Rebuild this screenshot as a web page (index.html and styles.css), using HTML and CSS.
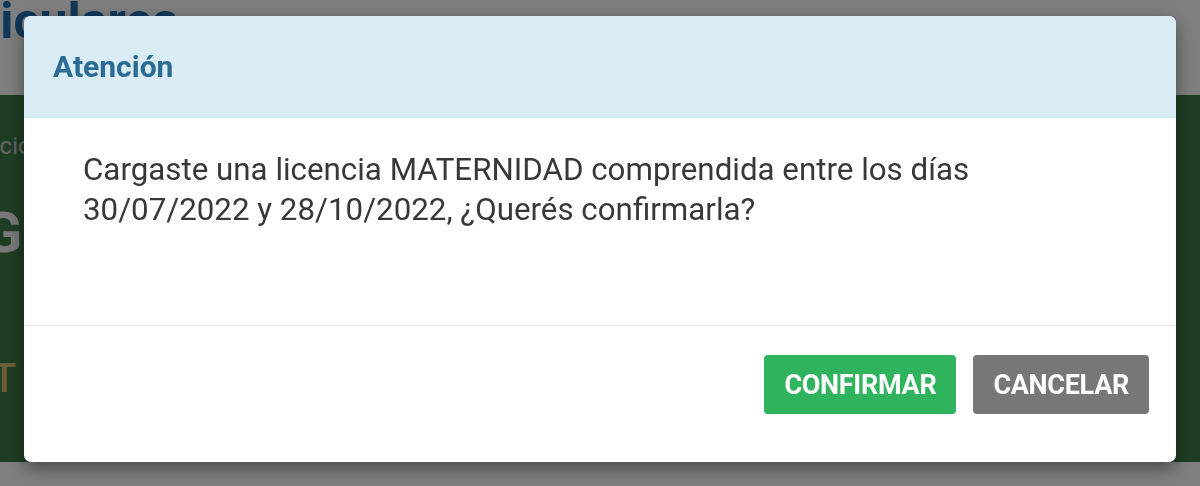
FILE: index.html
```html
<!DOCTYPE html>
<html lang="es">
<head>
<meta charset="utf-8">
<title>Atención</title>
<link rel="stylesheet" href="styles.css">
</head>
<body>
  <div class="page">
    <header class="page-top">
      <h1 class="page-title">Particulares</h1>
    </header>
    <section class="banner">
      <div class="crumb">Inicio</div>
      <div class="banner-title">GESTIÓN</div>
      <div class="banner-sub"><span class="tan">T</span> <span class="blue">I</span></div>
    </section>
  </div>

  <div class="overlay"></div>

  <div class="modal" role="dialog">
    <div class="modal-header">
      <h4 class="modal-title">Atención</h4>
    </div>
    <div class="modal-body">
      <p class="message">Cargaste una licencia MATERNIDAD comprendida entre los días<br>30/07/2022 y 28/10/2022, ¿Querés confirmarla?</p>
    </div>
    <div class="modal-footer">
      <button class="btn btn-confirm" type="button">CONFIRMAR</button>
      <button class="btn btn-cancel" type="button">CANCELAR</button>
    </div>
  </div>
</body>
</html>
```

FILE: styles.css
```css
* { box-sizing: border-box; }

html, body {
  margin: 0;
  padding: 0;
  width: 1200px;
  height: 486px;
  overflow: hidden;
  background: #ffffff;
  font-family: Roboto, "Liberation Sans", Arial, sans-serif;
}

.page {
  display: flex;
  flex-direction: column;
}

.page-top {
  height: 95px;
  background: #ffffff;
  overflow: hidden;
}

.page-title {
  margin: -7px 0 0 -95px;
  font-size: 50px;
  font-weight: 700;
  line-height: 56px;
  color: #1f70b0;
  white-space: nowrap;
}

.banner {
  height: 367px;
  background: #3e7b47;
  display: flex;
  flex-direction: column;
  overflow: hidden;
  white-space: nowrap;
}

.crumb {
  margin: 36px 0 0 -26px;
  font-size: 24px;
  line-height: 30px;
  color: #c9cfc9;
}

.banner-title {
  margin: 40px 0 0 -16px;
  font-size: 56px;
  font-weight: 700;
  line-height: 64px;
  color: #f2f2f2;
}

.banner-sub {
  margin: 90px 0 0 -8px;
  font-size: 40px;
  font-weight: 500;
  line-height: 48px;
}

.banner-sub .tan { color: #d6bd6c; }
.banner-sub .blue { color: #8fb7d6; }

.overlay {
  position: fixed;
  inset: 0;
  background: rgba(0, 0, 0, 0.5);
}

.modal {
  position: fixed;
  top: 16px;
  left: 24px;
  width: 1152px;
  height: 446px;
  background: #ffffff;
  border-radius: 7px;
  overflow: hidden;
  box-shadow: 0 6px 18px rgba(0, 0, 0, 0.45);
  display: flex;
  flex-direction: column;
}

.modal-header {
  height: 102px;
  padding: 33px 29px 0;
  background: #d9ebf5;
  border-bottom: 2px solid #c9eaee;
}

.modal-title {
  margin: 0;
  font-size: 30px;
  line-height: 36px;
  font-weight: 700;
  color: #2c6b93;
}

.modal-body {
  height: 207px;
  padding: 32px 59px 0;
}

.message {
  margin: 0;
  font-size: 31.3px;
  line-height: 40px;
  color: #383838;
}

.modal-footer {
  flex: 1;
  border-top: 1px solid #e6e6e6;
  padding: 29px 27px 0;
  display: flex;
  justify-content: flex-end;
  align-items: flex-start;
  gap: 17px;
}

.btn {
  height: 59px;
  padding: 0 20px;
  border: none;
  border-radius: 4px;
  font-family: Roboto, "Liberation Sans", Arial, sans-serif;
  font-size: 27px;
  font-weight: 700;
  color: #ffffff;
  letter-spacing: -0.3px;
}

.btn-confirm { background: #2fb35d; }
.btn-cancel { background: #777777; }
```
